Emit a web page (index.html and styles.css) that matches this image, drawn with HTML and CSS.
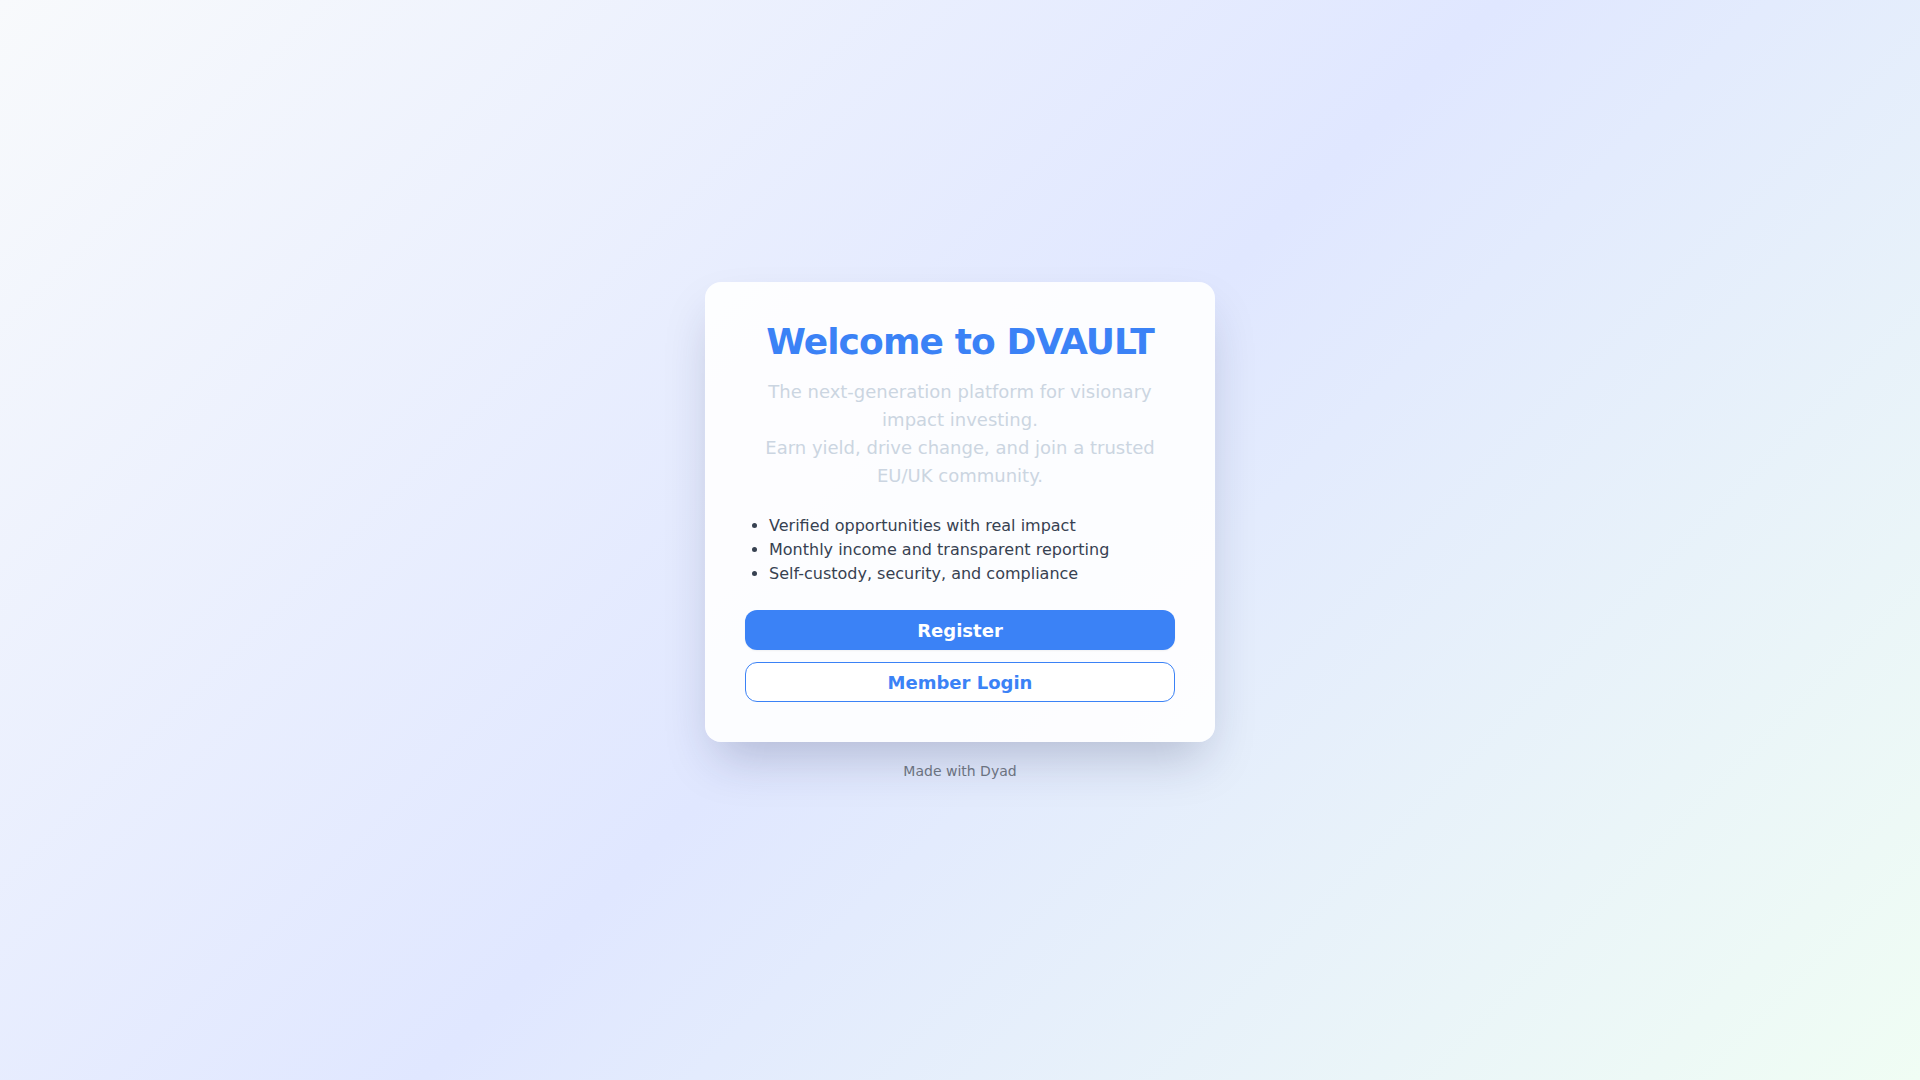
FILE: index.html
```html
<!DOCTYPE html>
<html lang="en">
<head>
<meta charset="utf-8">
<title>DVAULT</title>
<link rel="stylesheet" href="styles.css">
</head>
<body>
<main class="page">
  <section class="card">
    <h1 class="title">Welcome to DVAULT</h1>
    <p class="subtitle">The next-generation platform for visionary impact investing.<br>Earn yield, drive change, and join a trusted EU/UK community.</p>
    <ul class="features">
      <li>Verified opportunities with real impact</li>
      <li>Monthly income and transparent reporting</li>
      <li>Self-custody, security, and compliance</li>
    </ul>
    <div class="actions">
      <button class="btn btn-primary">Register</button>
      <button class="btn btn-outline">Member Login</button>
    </div>
  </section>
  <footer class="footer">Made with Dyad</footer>
</main>
</body>
</html>
```

FILE: styles.css
```css
* { box-sizing: border-box; }
html, body { margin: 0; padding: 0; height: 100%; }
body {
  font-family: "DejaVu Sans", Verdana, sans-serif;
  background: linear-gradient(135deg, #f8fafc 0%, #e0e7ff 50%, #f0fdf4 100%);
  min-height: 100vh;
}
.page {
  min-height: 100vh;
  display: flex;
  flex-direction: column;
  align-items: center;
  justify-content: center;
}
.card {
  width: 510px;
  padding: 40px;
  background: rgba(255, 255, 255, 0.9);
  border-radius: 16px;
  box-shadow: 0 25px 50px -12px rgba(30, 41, 80, 0.25);
  text-align: center;
  display: flex;
  flex-direction: column;
}
.title {
  margin: 0 0 16px;
  font-size: 36px;
  line-height: 40px;
  font-weight: 700;
  letter-spacing: -0.025em;
  color: #3b82f6;
}
.subtitle {
  margin: 0 0 24px;
  font-size: 18px;
  line-height: 28px;
  color: #cbd5e1;
}
.features {
  margin: 0 0 24px;
  padding: 0 0 0 24px;
  text-align: left;
  list-style: disc;
  font-size: 16px;
  line-height: 24px;
  color: #374151;
}
.actions {
  display: flex;
  flex-direction: column;
  gap: 12px;
}
.btn {
  height: 40px;
  border-radius: 12px;
  font-family: "DejaVu Sans", Verdana, sans-serif;
  font-size: 18px;
  font-weight: 700;
  cursor: pointer;
}
.btn-primary {
  background: #3b82f6;
  color: #ffffff;
  border: none;
  box-shadow: 0 1px 2px rgba(0, 0, 0, 0.05);
}
.btn-outline {
  background: #ffffff;
  color: #3b82f6;
  border: 1px solid #3b82f6;
}
.footer {
  margin-top: 19px;
  padding-bottom: 17px;
  font-size: 14px;
  line-height: 20px;
  color: #6b7280;
}
```
